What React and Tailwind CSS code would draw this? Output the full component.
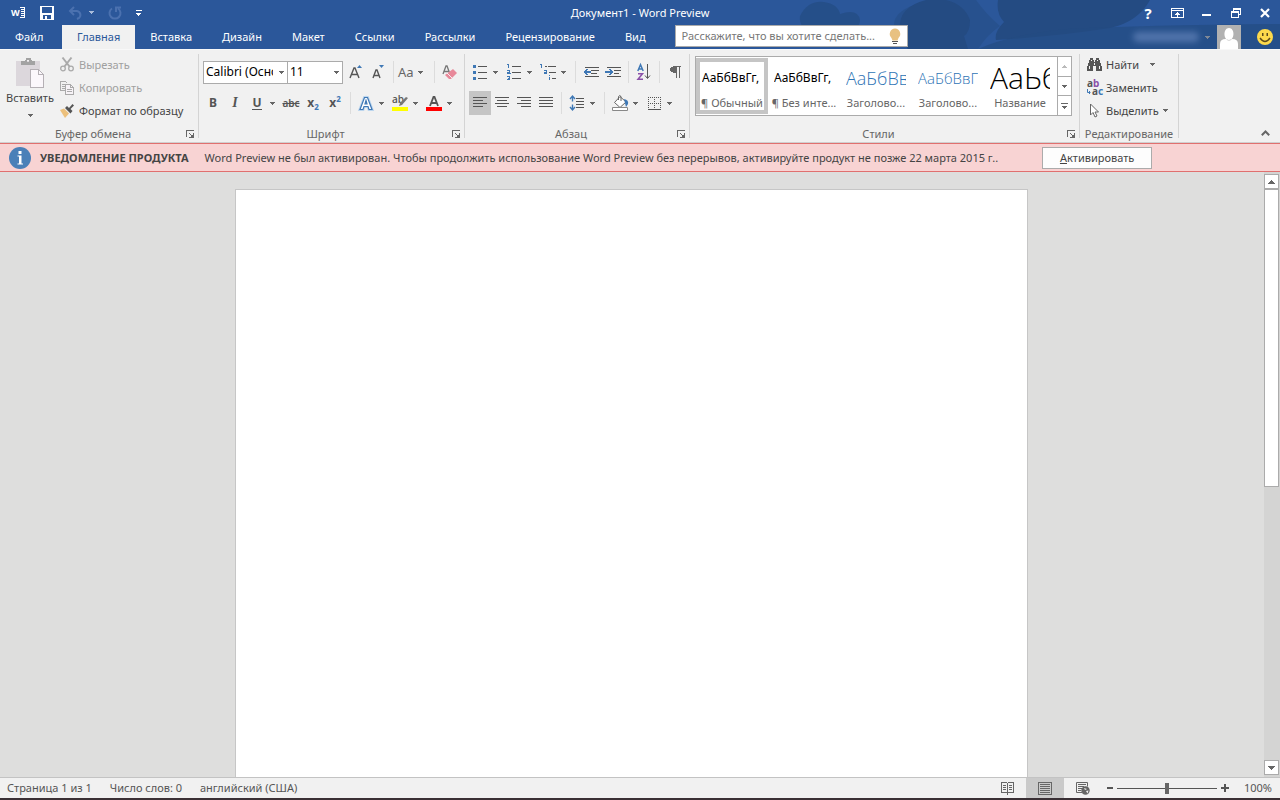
import { useState } from "react";

const tabs = [
  "Файл",
  "Главная",
  "Вставка",
  "Дизайн",
  "Макет",
  "Ссылки",
  "Рассылки",
  "Рецензирование",
  "Вид",
];

const styles = [
  { name: "¶ Обычный", sample: "АаБбВвГг,", look: "text-[12px] text-black" },
  { name: "¶ Без инте...", sample: "АаБбВвГг,", look: "text-[12px] text-black" },
  { name: "Заголово...", sample: "АаБбВв", look: "font-['Open_Sans'] text-[18px] font-light text-[#2e74b5]" },
  { name: "Заголово...", sample: "АаБбВвГ", look: "font-['Open_Sans'] text-[15px] font-light text-[#2e74b5]" },
  { name: "Название", sample: "АаЬб", look: "font-['Open_Sans'] text-[30px] font-light text-black" },
];

function Icon({ w = 16, h = 16, crisp = true, children }) {
  return (
    <svg
      width={w}
      height={h}
      viewBox={`0 0 ${w} ${h}`}
      fill="none"
      shapeRendering={crisp ? "crispEdges" : "auto"}
      className="shrink-0 overflow-visible"
      aria-hidden="true"
    >
      {children}
    </svg>
  );
}

function Caret({ color = "#666" }) {
  return (
    <Icon w={5} h={3}>
      <path d="M0 0h5v1h-1v1h-1v1h-1v-1h-1v-1h-1z" fill={color} />
    </Icon>
  );
}

function ScrollArrow({ up }) {
  return (
    <Icon w={7} h={4}>
      <path
        d={
          up
            ? "M3 0h1v1h1v1h1v1h1v1h-7v-1h1v-1h1v-1h1z"
            : "M0 0h7v1h-1v1h-1v1h-1v1h-1v-1h-1v-1h-1v-1h-1z"
        }
        fill="#666"
      />
    </Icon>
  );
}

function Tool({ label, active, children }) {
  return (
    <button
      aria-label={label}
      className={`flex h-6 w-[22px] shrink-0 items-center justify-center text-[#555] ${
        active ? "bg-[#c5c5c5]" : "hover:bg-[#d5d5d5]"
      }`}
    >
      {children}
    </button>
  );
}

function Drop({ label }) {
  return (
    <button aria-label={label} className="flex h-6 w-3 shrink-0 items-center pl-0.5">
      <Caret />
    </button>
  );
}

function Sep() {
  return <div className="mx-1 h-[22px] w-px shrink-0 bg-[#dcdcdc]" />;
}

function Group({ title, width, launcher, children }) {
  return (
    <section className={`flex shrink-0 flex-col border-r border-[#d4d4d4] ${width}`}>
      <div className="h-[76px]">{children}</div>
      <div className="flex h-2 items-center text-[#666]">
        <span className="flex-1 text-center whitespace-nowrap">{title}</span>
        {launcher && (
          <button aria-label={`${title}: параметры`} className="mr-1">
            <Icon w={8} h={8}>
              <path d="M0.500 7v-6.500h7M3 3l3 3M7.500 3v4.500h-4.500" stroke="#666" />
              <path d="M5 5h2v2h-2z" fill="#666" />
            </Icon>
          </button>
        )}
      </div>
    </section>
  );
}

function Lines({ rows }) {
  return (
    <Icon w={14} h={12}>
      {rows.map(([x, w], i) => (
        <rect key={i} x={x} y={i * 3} width={w} height="1" fill="#555" />
      ))}
    </Icon>
  );
}

function Combo({ label, width, value }) {
  return (
    <label className={`relative block ${width}`}>
      <span className="sr-only">{label}</span>
      <select className="block h-[23px] w-full appearance-none border border-[#ababab] bg-white pr-3.5 pl-0.5 text-[12px] text-black outline-none">
        <option>{value}</option>
      </select>
      <span className="pointer-events-none absolute top-[10px] right-1">
        <Caret />
      </span>
    </label>
  );
}

function TitleBar() {
  return (
    <div className="relative flex h-[25px] items-center">
      <div className="flex items-center pl-3">
        <Icon w={14} h={14}>
          <text x="-1" y="10" fontSize="9" fontWeight="700" fill="#fff" fontFamily="Open Sans">
            W
          </text>
          <path d="M8 1h5v11h-5v-1h4v-1h-3v-1h3v-1h-3v-1h3v-1h-3v-1h3v-1h-3v-1h3v-1h-4z" fill="#fff" />
        </Icon>
        <button aria-label="Сохранить" className="ml-3.5">
          <Icon w={14} h={14}>
            <path d="M0 0h14v14h-14zM2 1v6h10v-6zM3 9v4h2v-3h2v3h4v-4z" fill="#fff" fillRule="evenodd" />
          </Icon>
        </button>
        <button aria-label="Отменить" className="ml-3.5">
          <Icon w={15} h={14} crisp={false}>
            <path d="M6 1L2 5l4 4M2 5h7a4 4 0 0 1 2 7l-2 1" stroke="#4b71af" strokeWidth="2" />
          </Icon>
        </button>
        <button aria-label="Список отмены" className="ml-1.5">
          <Caret color="#a9bcdb" />
        </button>
        <button aria-label="Повторить" className="ml-3.5">
          <Icon w={14} h={14} crisp={false}>
            <path d="M4 2.500a5.500 5.500 0 1 0 6 0M8 6V1.500h5" stroke="#4b71af" strokeWidth="2" />
          </Icon>
        </button>
        <button aria-label="Настройка панели" className="ml-3.5">
          <Icon w={6} h={6}>
            <path d="M0 0h6v1h-6zM0 3h5v1h-1v1h-1v1h-1v-1h-1v-1h-1z" fill="#fff" />
          </Icon>
        </button>
      </div>
      <h1 className="absolute inset-x-0 top-1 text-center leading-[18px] text-white">
        Документ1 - Word Preview
      </h1>
      <div className="relative ml-auto flex items-center pr-2.5">
        <button aria-label="Справка" className="w-[22px] text-center text-[15px] leading-[18px] font-bold text-white">
          ?
        </button>
        <button aria-label="Параметры отображения ленты" className="ml-3">
          <Icon w={13} h={10}>
            <path d="M0.500 0.500h12v9h-12zM0.500 2.500h12M6.500 4v5" stroke="#fff" />
            <path d="M6 4h1v1h1v1h1v1h-5v-1h1v-1h1z" fill="#fff" />
          </Icon>
        </button>
        <button aria-label="Свернуть" className="ml-[18px] pt-1">
          <Icon w={9} h={2}>
            <path d="M0 0h9v2h-9z" fill="#fff" />
          </Icon>
        </button>
        <button aria-label="Свернуть в окно" className="ml-5">
          <Icon w={10} h={10}>
            <path d="M2.500 3V1h7v5h-2M0.500 4.500h7v5h-7zM0 4h8" stroke="#fff" />
            <path d="M2 0h8v2h-8zM0 3h8v2h-8z" fill="#fff" />
          </Icon>
        </button>
        <button aria-label="Закрыть" className="ml-[19px]">
          <Icon w={10} h={10} crisp={false}>
            <path d="M1 1l8 8M9 1l-8 8" stroke="#fff" strokeWidth="2.200" />
          </Icon>
        </button>
      </div>
    </div>
  );
}

function TabRow({ tab, setTab }) {
  return (
    <div className="relative flex h-6">
      <nav className="flex" role="tablist">
        {tabs.map((t) => (
          <button
            key={t}
            role="tab"
            aria-selected={t === tab}
            onClick={() => setTab(t)}
            className={`px-[15px] whitespace-nowrap first:w-[62px] first:text-left ${
              t === tab ? "bg-[#f1f1f1] text-[#2b579a]" : "text-white"
            }`}
          >
            {t}
          </button>
        ))}
      </nav>
      <label className="ml-3.5 flex h-[22px] w-[233px] items-center border border-[#ababab] bg-white pr-1.5 pl-1.5">
        <input
          aria-label="Помощник"
          placeholder="Расскажите, что вы хотите сделать..."
          className="min-w-0 flex-1 outline-none placeholder:text-[#777]"
        />
        <Icon w={12} h={16} crisp={false}>
          <path d="M6 0.500a5.500 5.500 0 0 1 3.500 9.500l-1 2.500h-5l-1-2.500a5.500 5.500 0 0 1 3.500-9.500z" fill="#e8c181" />
          <path d="M3 13h6v1h-6zM4 15h4v1h-4z" fill="#555" />
        </Icon>
      </label>
      <div className="ml-auto flex items-center pr-[7px]">
        <div className="h-2.5 w-[66px] rounded-full bg-[#5c7db4] opacity-80 blur-[3px]" />
        <button aria-label="Учетная запись" className="ml-1.5 flex items-center gap-[7px]">
          <Caret color="#7f8896" />
          <Icon w={24} h={24} crisp={false}>
            <path d="M0 0h24v24h-24z" fill="#b1b1b1" />
            <path d="M12 3c6 0 6 12 0 12s-6-12 0-12zM3 24v-5q0-5 6-5q3 3 6 0q6 0 6 5v5z" fill="#fff" />
          </Icon>
        </button>
        <button aria-label="Отправить отзыв" className="ml-4">
          <Icon w={16} h={16} crisp={false}>
            <circle cx="8" cy="8" r="8" fill="#fcd94c" />
            <path d="M5 4h1.500v3H5zM9.500 4H11v3H9.500z" fill="#5b4a1c" />
            <path d="M3 9q5 7 10 0" stroke="#5b4a1c" strokeWidth="1.300" />
          </Icon>
        </button>
      </div>
    </div>
  );
}

function ClipboardGroup() {
  return (
    <Group title="Буфер обмена" width="w-[199px]" launcher>
      <div className="flex">
        <button className="flex w-[60px] flex-col items-center pt-1 text-[#444]">
          <Icon w={28} h={30}>
            <path d="M0 3h24v25h-24z" fill="#dcd7dc" />
            <path d="M5 3h4v-1h1v-2h5v2h1v1h3v4h-14zM11 2v2h2v-2z" fill="#a3a3a3" fillRule="evenodd" />
            <path d="M14.500 11.500h8l5 5v13h-13z" fill="#fbf7fb" stroke="#b5b0b5" />
            <path d="M22.500 11.500v5h5" stroke="#b5b0b5" />
          </Icon>
          <span className="mt-0.5 mb-2">Вставить</span>
          <Caret />
        </button>
        <div className="-mt-px flex flex-col">
          <button disabled className="flex h-[23px] items-center gap-[5px] text-[#a0a0a0]">
            <Icon w={14} h={15} crisp={false}>
              <path d="M2.500 0.500l7 9M11.500 0.500l-7 9" stroke="#aaa" strokeWidth="2" />
              <circle cx="3" cy="11.500" r="2.300" stroke="#aaa" strokeWidth="1.300" />
              <circle cx="11" cy="11.500" r="2.300" stroke="#aaa" strokeWidth="1.300" />
            </Icon>
            Вырезать
          </button>
          <button disabled className="flex h-[23px] items-center gap-[5px] text-[#a0a0a0]">
            <Icon w={14} h={14}>
              <path d="M5 9.500h-4.500v-9h5l2 2M2 3.500h3M2 5.500h3M2 7.500h3" stroke="#aaa" />
              <path d="M5.500 3.500h5l3 3v7h-8z" fill="#f7f3f7" stroke="#aaa" />
              <path d="M10.500 3.500v3h3M7 8.500h5M7 10.500h5" stroke="#aaa" />
            </Icon>
            Копировать
          </button>
          <button className="flex h-[23px] items-center gap-[5px] text-[#444]">
            <Icon w={14} h={14} crisp={false}>
              <path d="M0 6l4-1.500 5 5-4 4.500z" fill="#ecc07c" />
              <path d="M5 4l2-2 2 2 3.500-4 1.500 1.500-3.500 3.500 2 2-2 2.500z" fill="#555" />
            </Icon>
            Формат по образцу
          </button>
        </div>
      </div>
    </Group>
  );
}

function FontGroup() {
  return (
    <Group title="Шрифт" width="w-[266px]" launcher>
      <div className="flex flex-col gap-[7px] pt-1.5 pl-[3px]">
        <div className="flex items-center pl-px">
          <Combo label="Шрифт" width="w-[85px]" value="Calibri (Основной текст)" />
          <Combo label="Размер шрифта" width="-ml-px w-14" value="11" />
          <div className="flex pl-0.5">
            <Tool label="Увеличить размер">
              <Icon w={14} h={14} crisp={false}>
                <path d="M1 13l4-10h1l4 10M2.500 9.500h6" stroke="#555" strokeWidth="1.400" />
                <path d="M8 3l2.500-3 2.500 3z" fill="#3f78b5" />
              </Icon>
            </Tool>
            <Tool label="Уменьшить размер">
              <Icon w={14} h={14} crisp={false}>
                <path d="M2 13l3-8h1l3 8M3 10.500h5" stroke="#555" strokeWidth="1.400" />
                <path d="M8 0l2.500 3 2.500-3z" fill="#3f78b5" />
              </Icon>
            </Tool>
          </div>
          <Sep />
          <button aria-label="Регистр" className="flex w-8 items-center gap-1 text-[13px] text-[#666]">
            Aa <Caret />
          </button>
          <Sep />
          <Tool label="Очистить формат">
            <Icon w={16} h={15} crisp={false}>
              <path d="M1 9l3-8h1l3 8M2 6.500h5" stroke="#777" strokeWidth="1.300" />
              <path d="M11 4l4 4-6 6h-2l-4-4z" fill="#e8899a" />
              <path d="M5 8l5 5" stroke="#f5eef0" />
            </Icon>
          </Tool>
        </div>
        <div className="flex items-center">
          <Tool label="Полужирный">
            <b className="text-[12px]">B</b>
          </Tool>
          <Tool label="Курсив">
            <i className="font-['Liberation_Serif'] text-[14px] font-bold">I</i>
          </Tool>
          <Tool label="Подчеркнутый">
            <span className="border-b border-[#555] text-[12px] leading-[13px] font-bold">U</span>
          </Tool>
          <Drop label="Вид подчеркивания" />
          <Tool label="Зачеркнутый">
            <s className="text-[10px] font-semibold">abc</s>
          </Tool>
          <Tool label="Подстрочный">
            <span className="text-[12px] font-bold">x</span>
            <span className="self-end text-[8px] font-bold text-[#3f78b5]">2</span>
          </Tool>
          <Tool label="Надстрочный">
            <span className="text-[12px] font-bold">x</span>
            <span className="self-start text-[8px] font-bold text-[#3f78b5]">2</span>
          </Tool>
          <Sep />
          <Tool label="Текстовые эффекты">
            <Icon w={14} h={15} crisp={false}>
              <path
                d="M1 13.500L5.500 1.500h3L13 13.500h-3l-1-3H5l-1 3zM6 8h2L7 4.500z"
                stroke="#bcd6ee"
                strokeWidth="3"
              />
              <path
                d="M1 13.500L5.500 1.500h3L13 13.500h-3l-1-3H5l-1 3zM6 8h2L7 4.500z"
                fill="#fff"
                fillRule="evenodd"
                stroke="#3f78b5"
                strokeWidth="1.200"
              />
            </Icon>
          </Tool>
          <Drop label="Эффекты" />
          <Tool label="Цвет выделения">
            <Icon w={16} h={17} crisp={false}>
              <text x="0" y="8" fontSize="10" fontWeight="600" fill="#555" fontFamily="Open Sans">
                ab
              </text>
              <path d="M14 2l2 1-6 7-3 1 1-3z" fill="#777" />
              <path d="M0 12h16v4h-16z" fill="#ff0" />
            </Icon>
          </Tool>
          <Drop label="Цвета выделения" />
          <Tool label="Цвет текста">
            <Icon w={16} h={17} crisp={false}>
              <path d="M4 11l3.500-9h1l3.500 9M5.500 8h5" stroke="#555" strokeWidth="1.800" />
              <path d="M0 12h16v4h-16z" fill="#f00" />
            </Icon>
          </Tool>
          <Drop label="Цвета текста" />
        </div>
      </div>
    </Group>
  );
}

function ParagraphGroup() {
  return (
    <Group title="Абзац" width="w-[225px]" launcher>
      <div className="flex flex-col gap-[7px] pt-1.5 pl-1">
        <div className="flex items-center">
          <Tool label="Маркеры">
            <Icon w={14} h={16}>
              <path d="M0 1h3v3h-3zM0 7h3v3h-3zM0 13h3v3h-3z" fill="#3f78b5" />
              <path d="M5 2.500h9M5 8.500h9M5 14.500h9" stroke="#555" />
            </Icon>
          </Tool>
          <Drop label="Виды маркеров" />
          <Tool label="Нумерация">
            <Icon w={14} h={16}>
              <path d="M0 .5h1.500v3.500M0 6.500h2.500v1.500h-2v1.500h3M0 12.500h2.500v3h-2.500M1 14h1" stroke="#3f78b5" />
              <path d="M5 2.500h9M5 8.500h9M5 14.500h9" stroke="#555" />
            </Icon>
          </Tool>
          <Drop label="Виды нумерации" />
          <Tool label="Многоуровневый список">
            <Icon w={16} h={16}>
              <path d="M0 .5h1.500v3.500M4 6.500h2.500v3h-2v-1.500h2M9.500 11v1M9.500 13v3" stroke="#3f78b5" />
              <path d="M5 2.500h2M8 2.500h8M9 8.500h7M12 14.500h4" stroke="#555" />
            </Icon>
          </Tool>
          <Drop label="Виды списков" />
          <Sep />
          <Tool label="Уменьшить отступ">
            <Icon w={16} h={11}>
              <path d="M2 .5h14M8 3.500h8M8 6.500h6M2 9.500h14" stroke="#555" />
              <path d="M0 5l3-3h2l-2 2h5v2h-5l2 2h-2z" fill="#3f78b5" />
            </Icon>
          </Tool>
          <Tool label="Увеличить отступ">
            <Icon w={16} h={11}>
              <path d="M2 .5h14M9 3.500h7M9 6.500h5M2 9.500h14" stroke="#555" />
              <path d="M8 5l-3-3h-2l2 2h-5v2h5l-2 2h2z" fill="#3f78b5" />
            </Icon>
          </Tool>
          <Sep />
          <Tool label="Сортировка">
            <Icon w={14} h={16} crisp={false}>
              <path d="M.8 7L3.500.7 6.200 7M1.500 5h4" stroke="#3f78b5" strokeWidth="1.500" />
              <path d="M1 9.700h4.500L1 15.200h5" stroke="#8a50a8" strokeWidth="1.500" />
              <path d="M10.500 0v14M8 11.500l2.500 3 2.500-3" stroke="#555" />
            </Icon>
          </Tool>
          <Sep />
          <Tool label="Все знаки">
            <Icon w={11} h={12}>
              <path d="M3 0h8v1h-1v11h-1v-11h-2v11h-1v-5h-3v-1h-2v-1h-1v-3h1v-1h2z" fill="#666" />
            </Icon>
          </Tool>
        </div>
        <div className="flex items-center">
          <Tool label="По левому краю" active>
            <Lines rows={[[0, 14], [0, 10], [0, 14], [0, 10]]} />
          </Tool>
          <Tool label="По центру">
            <Lines rows={[[0, 14], [2, 10], [0, 14], [2, 10]]} />
          </Tool>
          <Tool label="По правому краю">
            <Lines rows={[[0, 14], [4, 10], [0, 14], [4, 10]]} />
          </Tool>
          <Tool label="По ширине">
            <Lines rows={[[0, 14], [0, 14], [0, 14], [0, 14]]} />
          </Tool>
          <Sep />
          <Tool label="Интервал">
            <Icon w={14} h={16} crisp={false}>
              <path
                d="M2.500 1v5.500M2.500 9.500v5.500M0 4l2.500-3L5 4M0 12l2.500 3L5 12"
                stroke="#3f78b5"
                strokeWidth="1.400"
              />
              <path d="M6 3.500h8M6 6.500h8M6 9.500h8M6 12.500h8" stroke="#555" />
            </Icon>
          </Tool>
          <Drop label="Интервалы" />
          <Sep />
          <Tool label="Заливка">
            <Icon w={17} h={16} crisp={false}>
              <path d="M8 1.500l6 5.500-5.500 5h-1L2.500 7.500z" fill="#fff" stroke="#666" />
              <path d="M6.500 5V1.500q1-2 2.500 0V6" stroke="#666" />
              <path d="M12 4q5 1 4 5l-2 3z" fill="#3f78b5" />
              <path d="M.5 12.500h15v3h-15z" fill="#fff" stroke="#888" />
            </Icon>
          </Tool>
          <Drop label="Цвета заливки" />
          <Tool label="Границы">
            <Icon w={13} h={13}>
              <path d="M0 .5h13M0 6.500h13M.5 0v13M6.500 0v13M12.500 0v13" stroke="#555" strokeDasharray="1 1" />
              <path d="M0 12.500h13" stroke="#555" />
            </Icon>
          </Tool>
          <Drop label="Виды границ" />
        </div>
      </div>
    </Group>
  );
}

function StylesGroup() {
  return (
    <Group title="Стили" width="w-[390px]" launcher>
      <div className="pt-0.5 pl-[5px]">
        <div className="flex h-[60px] w-[377px] border border-[#ababab] bg-white">
          <div className="flex flex-1 pt-px">
            {styles.map((s, i) => (
              <button
                key={i}
                className={`flex h-14 w-[72px] flex-col items-center ${
                  i === 0 ? "outline-4 -outline-offset-4 outline-[#c5c5c5]" : ""
                }`}
              >
                <span
                  className={`flex h-[37px] w-[60px] items-center overflow-hidden pt-0.5 whitespace-nowrap ${s.look}`}
                >
                  {s.sample}
                </span>
                <span className="whitespace-nowrap text-[#666]">{s.name}</span>
              </button>
            ))}
          </div>
          <div className="flex w-[14px] flex-col divide-y divide-[#ababab] border-l border-[#ababab]">
            <button aria-label="Вверх" className="flex flex-1 items-center justify-center">
              <span className="rotate-180">
                <Caret color="#bbb" />
              </span>
            </button>
            <button aria-label="Вниз" className="flex flex-1 items-center justify-center">
              <Caret />
            </button>
            <button aria-label="Все стили" className="flex flex-1 items-center justify-center">
              <Icon w={7} h={6}>
                <path d="M0 0h7v1h-7zM1 3h5v1h-1v1h-1v1h-1v-1h-1v-1h-1z" fill="#666" />
              </Icon>
            </button>
          </div>
        </div>
      </div>
    </Group>
  );
}

function EditGroup() {
  return (
    <Group title="Редактирование" width="w-[99px]">
      <div className="-mt-px flex flex-col pl-[7px] text-[#444]">
        <button className="flex h-[23px] items-center gap-1">
          <Icon w={15} h={13}>
            <path
              d="M3 0h3v2h1v2h1v-2h1v-2h3v2h1v3h1v3h1v5h-6v-5h-3v5h-6v-5h1v-3h1v-3h1z"
              fill="#555"
            />
            <path d="M4 2h1v1h-1zM10 2h1v1h-1zM2 8h1v3h-1zM12 8h1v3h-1zM7 5h1v2h-1z" fill="#f1f1f1" />
          </Icon>
          <span className="w-9 text-left">Найти</span>
          <span className="ml-1">
            <Caret />
          </span>
        </button>
        <button className="flex h-[23px] items-center gap-1">
          <Icon w={15} h={16} crisp={false}>
            <text x="0" y="7" fontSize="10" fontWeight="700" fill="#555">
              a<tspan fill="#8a50a8">b</tspan>
            </text>
            <text x="5" y="15" fontSize="10" fontWeight="700" fill="#555">
              a<tspan fill="#3f78b5">c</tspan>
            </text>
            <path d="M.5 9v3.500h3M2.500 11v3" stroke="#3f78b5" />
          </Icon>
          Заменить
        </button>
        <button className="flex h-[23px] items-center gap-1">
          <span className="flex w-[15px] justify-center">
            <Icon w={9} h={15} crisp={false}>
              <path d="M.5 1v11l2.500-2.500 2 4.500 2-1-2-4H8.500z" fill="#fff" stroke="#666" />
            </Icon>
          </span>
          Выделить
          <Caret />
        </button>
      </div>
    </Group>
  );
}

function Notice() {
  return (
    <div className="flex h-[29px] shrink-0 items-center border-y border-[#e0706f] bg-[#f8d3d3] pl-[9px] text-[#444]">
      <Icon w={22} h={22} crisp={false}>
        <circle cx="11" cy="11" r="11" fill="#4a80b8" />
        <path d="M9.500 4h3v3h-3zM8.500 8.500h4v8h1.500v1h-5.500v-1h1.500v-7h-1.500z" fill="#fff" />
      </Icon>
      <strong className="ml-[9px] whitespace-nowrap">УВЕДОМЛЕНИЕ ПРОДУКТА</strong>
      <span className="ml-4 whitespace-nowrap">
        Word Preview не был активирован. Чтобы продолжить использование Word Preview без перерывов,
        активируйте продукт не позже 22 марта 2015 г..
      </span>
      <button className="ml-11 h-[22px] w-[110px] border border-[#ababab] bg-[#fdfdfd]">
        <u>А</u>ктивировать
      </button>
    </div>
  );
}

function StatusBar() {
  return (
    <footer className="flex h-[23px] shrink-0 items-stretch border-t border-b-2 border-t-[#c3c3c3] border-b-[#3a3035] bg-[#f1f1f1] text-[#555]">
      <div className="flex items-center gap-[18px] pl-[7px]">
        <span>Страница 1 из 1</span>
        <span>Число слов: 0</span>
        <span>английский (США)</span>
      </div>
      <div className="ml-auto flex">
        <button aria-label="Режим чтения" className="flex w-[38px] items-center justify-center">
          <Icon w={13} h={13}>
            <path
              d="M.5 .5h5l1 1 1-1h5v10h-5l-1 1-1-1h-5zM6.500 1v12M2 3.500h3M2 5.500h3M2 7.500h3M8 3.500h3M8 5.500h3M8 7.500h3"
              stroke="#666"
            />
          </Icon>
        </button>
        <button
          aria-label="Разметка страницы"
          className="flex w-[38px] items-center justify-center bg-[#cacaca]"
        >
          <Icon w={14} h={13}>
            <path d="M.5 .5h13v12h-13zM2 2.500h10M2 4.500h10M2 6.500h10M2 8.500h10M2 10.500h10" stroke="#666" />
          </Icon>
        </button>
        <button aria-label="Веб-документ" className="flex w-[38px] items-center justify-center">
          <Icon w={14} h={13} crisp={false}>
            <path d="M6 10.500h-5.500v-10h11v4M2 2.500h8M2 4.500h6M2 6.500h4M2 8.500h3" stroke="#666" />
            <circle cx="9.500" cy="8.500" r="4.200" fill="#666" />
            <path d="M8 6l3 1-2 1zM10 9l2.500-.5-1 3z" fill="#f1f1f1" />
          </Icon>
        </button>
      </div>
      <div className="flex items-center">
        <button aria-label="Уменьшить" className="ml-[5px]">
          <Icon w={6} h={2}>
            <path d="M0 0h6v2h-6z" fill="#555" />
          </Icon>
        </button>
        <input
          type="range"
          aria-label="Масштаб"
          min="0"
          max="200"
          defaultValue="100"
          className="mx-1 h-3 w-[100px] appearance-none bg-[linear-gradient(#555,#555)] bg-[length:100%_1px] bg-center bg-no-repeat [&::-webkit-slider-thumb]:h-[11px] [&::-webkit-slider-thumb]:w-1 [&::-webkit-slider-thumb]:appearance-none [&::-webkit-slider-thumb]:bg-[#666]"
        />
        <button aria-label="Увеличить">
          <Icon w={8} h={8}>
            <path d="M3 0h2v3h3v2h-3v3h-2v-3h-3v-2h3z" fill="#555" />
          </Icon>
        </button>
        <span className="w-[51px] pr-2 text-right">100%</span>
      </div>
    </footer>
  );
}

export default function App() {
  const [tab, setTab] = useState("Главная");

  return (
    <div className="flex h-screen flex-col overflow-hidden bg-[#dededd] font-['Noto_Sans','Open_Sans',sans-serif] text-[11px] leading-4">
      <header className="relative shrink-0 bg-[#2b579a]">
        <svg
          className="absolute top-0 right-0"
          width="512"
          height="49"
          viewBox="0 0 512 49"
          fill="#244b82"
          aria-hidden="true"
        >
          <path
            d="M32 16q8-16 24-14q14 2 16 12q18-6 20 6q0 10-14 10h-30q-18 0-16-14z"
            opacity=".7"
          />
          <path d="M166 0h42q10 14 24 26q-12 8-22 23h-70q-4-14-14-22q-2-20 40-27z" opacity=".5" />
          <path d="M158 0h20q18 4 24 20q0 12-6 16l4 13h-60q-8-8-8-20q-2-22 26-29z" />
          <path d="M230 0h152q-12 22-40 28q-50 8-114 12q-2-8 8-18q-8-8-6-22z" />
          <path d="M210 49q30-14 90-20q80-4 212-5v25z" opacity=".7" />
        </svg>
        <TitleBar />
        <TabRow tab={tab} setTab={setTab} />
      </header>
      <div className="flex shrink-0 border-t border-b border-t-[#f8f8f8] border-b-[#d0d0d0] bg-[#f1f1f1]">
        <div className="flex py-1">
          <ClipboardGroup />
          <FontGroup />
          <ParagraphGroup />
          <StylesGroup />
          <EditGroup />
        </div>
        <button aria-label="Свернуть ленту" className="mt-auto mr-2.5 mb-1.5 ml-auto">
          <Icon w={9} h={6} crisp={false}>
            <path d="M.8 5.200L4.500 1.500 8.200 5.200" stroke="#666" strokeWidth="2" />
          </Icon>
        </button>
      </div>
      <Notice />
      <main className="flex min-h-0 flex-1">
        <div className="flex flex-1 justify-center pt-[17px] pr-0.5">
          <div className="w-[793px] border border-b-0 border-[#c6c6c6] bg-white" />
        </div>
        <div className="flex w-4 flex-col bg-[#d4d4d3] pt-0.5 pr-px pb-0.5">
          <button
            aria-label="Прокрутить вверх"
            className="flex h-[15px] items-center justify-center border border-[#ababab] bg-white"
          >
            <ScrollArrow up />
          </button>
          <div className="h-[298px] border border-[#ababab] bg-white" />
          <button
            aria-label="Прокрутить вниз"
            className="mt-auto flex h-[15px] items-center justify-center border border-[#ababab] bg-white"
          >
            <ScrollArrow />
          </button>
        </div>
      </main>
      <StatusBar />
    </div>
  );
}
